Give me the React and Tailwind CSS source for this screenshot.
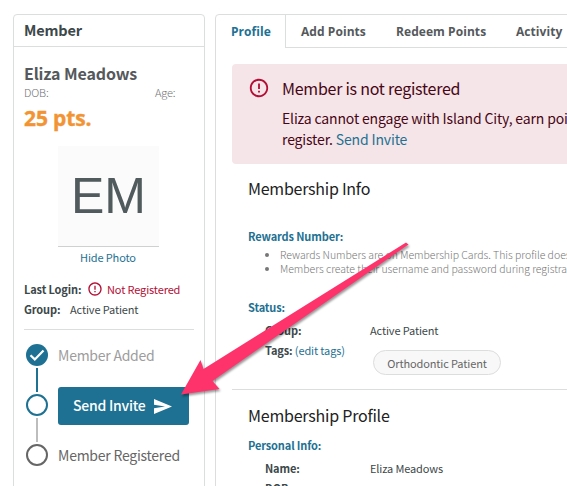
import { useState } from 'react';

const tabs = [
  { name: 'Profile', size: 'w-[70px] pl-[15px]' },
  { name: 'Add Points', size: 'w-[95px] pl-[15px]' },
  { name: 'Redeem Points', size: 'w-[120px] pl-[15px]' },
  { name: 'Activity', size: 'w-[90px] pl-[15px]' },
];

function AlertIcon({ className }) {
  return (
    <svg viewBox="0 0 24 24" className={className} fill="currentColor">
      <path d="M11 15h2v2h-2zm0-8h2v6h-2zm.99-5C6.47 2 2 6.48 2 12s4.47 10 9.99 10C17.52 22 22 17.52 22 12S17.52 2 11.99 2zM12 20c-4.42 0-8-3.58-8-8s3.58-8 8-8 8 3.58 8 8-3.58 8-8 8z" />
    </svg>
  );
}

function MemberCard() {
  return (
    <aside className="h-[490px] w-[192px] shrink-0 rounded-t-[4px] border border-[#dcdddd] bg-white">
      <h2 className="h-8 border-b border-[#dcdddd] pl-[10px] text-[14.5px] leading-[30px] font-bold tracking-[-0.15px] text-[#3c484a]">
        Member
      </h2>
      <div className="px-[10px] pt-[15px]">
        <h3 className="text-[16px] leading-[22px] font-bold text-[#55595c]">Eliza Meadows</h3>
        <div className="flex text-[11px] leading-4 font-light text-[#6f7375]">
          <span className="w-[131px]">DOB:</span>
          <span>Age:</span>
        </div>
        <div className="h-[35px] font-['Open_Sans',sans-serif] text-[21px] leading-[36px] font-bold text-[#f29433] [-webkit-text-stroke:0.4px_#f29433]">
          25 pts.
        </div>

        {/* Photo */}
        <div className="mt-[11px] ml-[34px] flex h-[101px] w-[101px] items-center justify-center border-b border-[#cfd0d0] bg-[#fbfbfb] font-['Liberation_Sans',sans-serif] text-[50px] leading-none tracking-normal text-[#515a5c]">
          EM
        </div>
        <a className="block h-5 pl-[56px] text-[11px] leading-5 text-[#1e7192]">Hide Photo</a>

        <div className="mt-3 flex h-5 items-center text-[11px] leading-5 text-[#3c484a]">
          <b className="w-[63px]">Last Login:</b>
          <AlertIcon className="size-4 text-[#b30e35]" />
          <span className="ml-1 text-[#b30e35]">Not Registered</span>
        </div>
        <div className="flex h-5 text-[11px] leading-5 text-[#3c484a]">
          <b className="w-[46px]">Group:</b>
          <span>Active Patient</span>
        </div>
        <hr className="mt-[10px] border-[#dcdddd]" />

        {/* Registration steps */}
        <div className="flex pt-[14px]">
          <div className="ml-[2px] flex w-[22px] flex-col items-center">
            <svg viewBox="0 0 22 22" className="size-[22px]">
              <circle cx="11" cy="11" r="11" fill="#1e7192" />
              <path d="M4.500 11.200l4.300 4.200L17.500 6.500" fill="none" stroke="#fff" strokeWidth="2.200" />
            </svg>
            <div className="my-[2px] h-6 w-[2px] bg-[#1e7192]" />
            <div className="size-[22px] rounded-full border-2 border-[#1e7192]" />
            <div className="my-[2px] h-6 w-[2px] bg-[#bdbdbd]" />
            <div className="size-[22px] rounded-full border-2 border-[#666]" />
          </div>
          <div className="ml-[10px] text-[14px] tracking-[-0.24px] whitespace-nowrap">
            <div className="h-[43px] leading-[22px] text-[#9d9d9d]">Member Added</div>
            <button className="flex h-[38px] w-[131px] items-center rounded-[3px] bg-[#1e7192] pl-[15px] font-medium text-white">
              <span className="w-[81px] pb-[2px] text-left">Send Invite</span>
              <svg viewBox="0 0 18 15" className="h-[15px] w-[18px]" fill="#fff">
                <path d="M0 0l18 7.500L0 15V9.200l11-1.700L0 5.800z" />
              </svg>
            </button>
            <div className="mt-[19px] leading-[22px] text-[#666]">Member Registered</div>
          </div>
        </div>
      </div>
    </aside>
  );
}

function Tabs({ active, onSelect }) {
  return (
    <nav className="flex h-[33px]">
      {tabs.map((tab) => (
        <button
          key={tab.name}
          onClick={() => onSelect(tab.name)}
          className={`${tab.size} shrink-0 text-left font-['Open_Sans',sans-serif] text-[12px] leading-[33px] font-bold tracking-[0.06px] whitespace-nowrap ${
            active === tab.name ? 'border-r border-[#dcdddd] text-[#1e7192]' : 'border-b border-[#dcdddd] text-[#55595c]'
          }`}
        >
          {tab.name}
        </button>
      ))}
    </nav>
  );
}

function Profile() {
  return (
    <div className="pl-4 text-[11px] text-[#3c484a]">
      {/* Registration notice */}
      <section className="mt-4 flex h-[100px] w-[420px] rounded-[4px] bg-[#f5e5e8] text-[#470615]">
        <AlertIcon className="mt-[13px] ml-4 size-[22px] text-[#b30e35]" />
        <div className="pt-[12px] pl-3 whitespace-nowrap">
          <h4 className="text-[16px] leading-6 tracking-[-0.25px]">Member is not registered</h4>
          <p className="mt-[8px] text-[14px] leading-[21px] tracking-[-0.15px]">
            Eliza cannot engage with Island City, earn points, or
            <br />
            register. <a className="text-[#1e7192]">Send Invite</a>
          </p>
        </div>
      </section>

      <section className="h-[226px] border-b border-[#dcdddd] pt-3 pl-4">
        <h3 className="text-[16px] leading-6 tracking-[-0.25px] text-[#222]">Membership Info</h3>
        <h5 className="mt-[26px] leading-5 font-bold text-[#1e7192]">Rewards Number:</h5>
        <ul className="mt-[2px] list-disc pl-8 text-[10.5px] leading-[14px] font-light tracking-[-0.03px] whitespace-nowrap text-[#777]">
          <li>Rewards Numbers are on Membership Cards. This profile does not</li>
          <li>Members create their username and password during registration</li>
        </ul>
        <h5 className="mt-[21px] leading-5 font-bold text-[#1e7192]">Status:</h5>
        <div className="mt-[3px] flex pl-[17px] leading-5">
          <b className="w-[105px]">Group:</b>
          <span>Active Patient</span>
        </div>
        <div className="flex pl-[17px] leading-5">
          <div className="w-[108px]">
            <b>Tags:</b> <a className="text-[#1e7192]">(edit tags)</a>
          </div>
          <span className="mt-[10px] h-[25px] w-[128px] rounded-full border border-[#dcdddd] bg-[#f8f8f8] text-center leading-6 text-[#666]">
            Orthodontic Patient
          </span>
        </div>
      </section>

      <section className="pt-[13px] pl-4">
        <h3 className="text-[16px] leading-6 tracking-[-0.22px] text-[#222]">Membership Profile</h3>
        <h5 className="mt-2 leading-5 font-bold text-[#1e7192]">Personal Info:</h5>
        <div className="mt-[3px] grid grid-cols-[105px_auto] pl-[17px] leading-5">
          <b>Name:</b>
          <span>Eliza Meadows</span>
          <b>DOB:</b>
        </div>
      </section>
    </div>
  );
}

export default function App() {
  const [active, setActive] = useState('Profile');

  return (
    <div className="relative flex h-[486px] w-[567px] gap-[10px] overflow-hidden bg-white pt-[14px] pl-[13px] font-['Noto_Sans_CJK_SC',sans-serif] tracking-[-0.13px]">
      <MemberCard />
      <main className="h-[490px] w-[440px] shrink-0 overflow-hidden rounded-tl-[4px] border border-[#dcdddd] bg-white">
        <Tabs active={active} onSelect={setActive} />
        <Profile />
      </main>

      {/* Pointer to the invite button */}
      <svg className="pointer-events-none absolute inset-0 h-[486px] w-[567px] drop-shadow-[1px_2px_1px_rgba(0,0,0,0.4)]">
        <path d="M406 242.500L408.500 244.500L212.500 381L219.500 389L181 394.500L200.500 360L203.500 369Z" fill="#ff336c" />
      </svg>
    </div>
  );
}
